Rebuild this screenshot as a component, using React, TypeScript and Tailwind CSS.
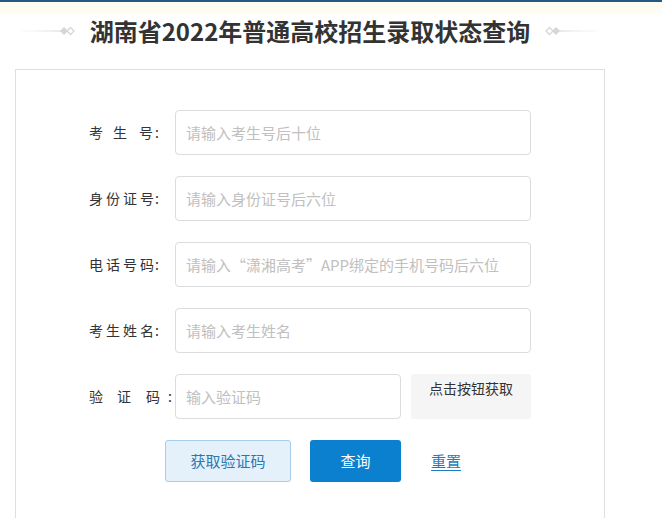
import React from "react";

const font = { fontFamily: '"Noto Sans CJK SC", "Noto Sans", sans-serif' };

function Deco({ flip }: { flip?: boolean }) {
  const id = flip ? "gr" : "gl";
  return (
    <svg width="56" height="14" viewBox="0 0 56 14" className={flip ? "-scale-x-100" : ""}>
      <defs>
        <linearGradient id={id} x1="0" x2="1" y1="0" y2="0">
          <stop offset="0" stopColor="#e8e8e8" stopOpacity="0.3" />
          <stop offset="1" stopColor="#cfcfcf" />
        </linearGradient>
      </defs>
      <rect x="0" y="6.5" width="42" height="1" fill={`url(#${id})`} />
      <path d="M38 7 L42 3 L46 7 L42 11 Z" fill="#d6d6d6" />
      <path d="M45 7 L48.5 3.5 L52 7 L48.5 10.5 Z" fill="none" stroke="#d6d6d6" strokeWidth="1.3" />
    </svg>
  );
}

function Label({ chars, widths }: { chars: string[]; widths: number[] }) {
  return (
    <div className="flex w-[86px] shrink-0 items-center text-[14px] text-[#333]">
      {chars.map((c, i) => (
        <span key={i} className="inline-block shrink-0" style={{ width: widths[i] }}>
          {c}
        </span>
      ))}
      <span className="inline-block">:</span>
    </div>
  );
}

function Row({ chars, widths, placeholder }: { chars: string[]; widths: number[]; placeholder: string }) {
  return (
    <div className="flex items-center">
      <Label chars={chars} widths={widths} />
      <input
        className="h-[45px] w-[356px] rounded-[4px] border border-[#dcdcdc] bg-white px-[10px] text-[15px] text-[#333] outline-none placeholder:text-[#c0c0c0]"
        placeholder={placeholder}
        style={font}
      />
    </div>
  );
}

export default function App() {
  return (
    <div className="min-h-[518px] w-[662px] overflow-hidden bg-white" style={font}>
      <div className="h-[2px] bg-[#245a80]" />
      <div className="h-[12px] bg-[#fffcf1]" />
      <div className="ml-[15px] w-[590px]">
        <div className="flex h-[34px] items-center justify-center gap-[12px]">
          <Deco />
          <h1 className="text-[24px] font-bold leading-none text-[#333]">湖南省2022年普通高校招生录取状态查询</h1>
          <Deco flip />
        </div>
        <div className="mt-[21px] border border-[#dedede] pt-[40px] pb-[60px] pl-[73px]">
          <div className="flex flex-col gap-[21px]">
            <Row chars={["考", "生", "号"]} widths={[24, 26, 16]} placeholder="请输入考生号后十位" />
            <Row chars={["身", "份", "证", "号"]} widths={[17, 17, 17, 15]} placeholder="请输入身份证号后六位" />
            <Row chars={["电", "话", "号", "码"]} widths={[17, 17, 17, 15]} placeholder="请输入“潇湘高考”APP绑定的手机号码后六位" />
            <Row chars={["考", "生", "姓", "名"]} widths={[17, 17, 17, 15]} placeholder="请输入考生姓名" />
            <div className="flex items-center">
              <Label chars={["验", "证", "码"]} widths={[28, 29, 22]} />
              <input
                className="h-[45px] w-[226px] rounded-[4px] border border-[#dcdcdc] bg-white px-[10px] text-[15px] text-[#333] outline-none placeholder:text-[#c0c0c0]"
                placeholder="输入验证码"
                style={font}
              />
              <div className="ml-[10px] h-[45px] w-[120px] rounded-[3px] bg-[#f5f5f5] pt-[4px] text-center text-[14px] text-[#333]">
                点击按钮获取
              </div>
            </div>
          </div>
          <div className="mt-[21px] flex items-center pl-[76px]">
            <button className="h-[42px] w-[126px] rounded-[3px] border border-[#a8cde8] bg-[#e4f1fb] text-[15px] text-[#2a78b3]">
              获取验证码
            </button>
            <button className="ml-[19px] h-[42px] w-[91px] rounded-[3px] bg-[#0b80cf] text-[15px] text-white">
              查询
            </button>
            <a className="ml-[30px] text-[15px] text-[#1c7cbf] underline underline-offset-[3px]">重置</a>
          </div>
        </div>
      </div>
    </div>
  );
}
